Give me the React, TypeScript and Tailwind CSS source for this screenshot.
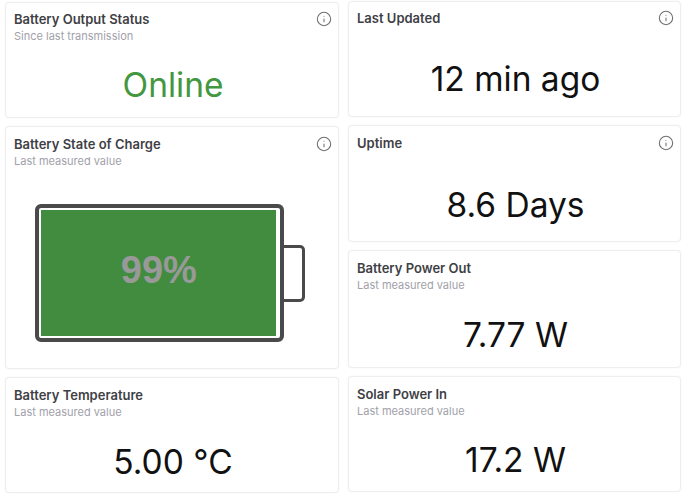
import { Info } from 'lucide-react'

type CardProps = {
  title: string
  subtitle?: string
  value?: string
  valueClass?: string
  valueBox?: string
  info?: boolean
  className?: string
  children?: React.ReactNode
}

function Card({ title, subtitle, value, valueClass, valueBox, info, className, children }: CardProps) {
  return (
    <div className={`flex flex-col rounded-[4px] border border-[#eeeeee] bg-white pl-[8px] pr-[6px] shadow-[0_0_2px_rgba(0,0,0,0.06)] ${className}`}>
      <div className="flex items-start justify-between">
        <div className="flex flex-col">
          <span className="text-[13px] leading-[16px] font-semibold text-[#3f3f46]">{title}</span>
          {subtitle && <span className="mt-[2px] text-[11px] leading-[14px] text-[#a1a1aa]">{subtitle}</span>}
        </div>
        {info && <Info size={16} strokeWidth={1.6} className="text-[#6f6f6f]" />}
      </div>
      {value && (
        <div className={`flex flex-1 items-center justify-center ${valueBox}`}>
          <span className={`text-[33.5px] leading-none ${valueClass ?? 'text-[#111111]'}`}>{value}</span>
        </div>
      )}
      {children}
    </div>
  )
}

function Battery() {
  return (
    <div className="mt-[36px] ml-[21px] flex items-center">
      <div className="h-[138px] w-[249px] rounded-[6px] border-[4px] border-[#4a4a4a] bg-white p-[2px]">
        <div className="flex h-full w-[99%] items-center justify-center bg-[#418c3f] pb-[6px] pl-[1px]">
          <span className="font-['Liberation_Sans',sans-serif] text-[38px] leading-none font-bold text-[#999999]">99%</span>
        </div>
      </div>
      <div className="h-[57px] w-[22px] -ml-[1px] rounded-r-[5px] border-[3px] border-l-0 border-[#4a4a4a]" />
    </div>
  )
}

export default function App() {
  return (
    <div className="flex h-[500px] w-[684px] gap-[9px] bg-white pl-[5px] font-['Inter',sans-serif]">
      <div className="flex w-[334px] flex-col gap-[8px] pt-[2px]">
        <Card title="Battery Output Status" subtitle="Since last transmission" value="Online" valueClass="text-[#43983f]" valueBox="pt-[11px]" info className="h-[116px] pt-[8px]" />
        <Card title="Battery State of Charge" subtitle="Last measured value" info className="h-[243px] pt-[9px]">
          <Battery />
        </Card>
        <Card title="Battery Temperature" subtitle="Last measured value" value="5.00 °C" valueBox="pt-[14px]" className="h-[116px] pt-[9px]" />
      </div>
      <div className="flex w-[333px] flex-col gap-[8px] pt-[1px]">
        <Card title="Last Updated" value="12 min ago" valueBox="pt-[17px]" info className="h-[116px] pt-[8px]" />
        <Card title="Uptime" value="8.6 Days" valueBox="pt-[20px]" info className="h-[117px] pt-[9px]" />
        <Card title="Battery Power Out" subtitle="Last measured value" value="7.77 W" valueBox="pt-[12px]" className="h-[118px] pt-[9px]" />
        <Card title="Solar Power In" subtitle="Last measured value" value="17.2 W" valueBox="pt-[12px]" className="h-[116px] pt-[9px]" />
      </div>
    </div>
  )
}
